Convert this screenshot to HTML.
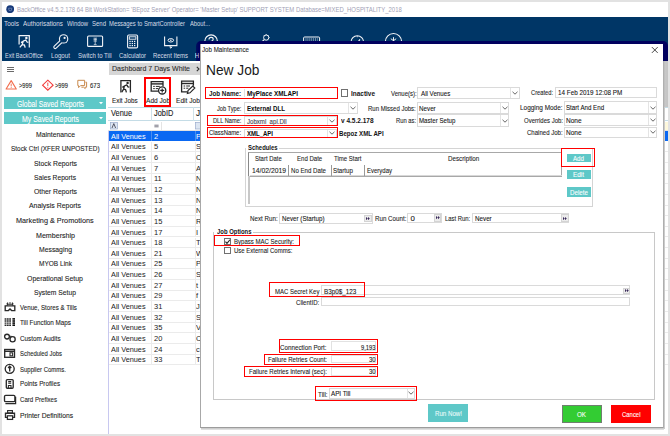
<!DOCTYPE html><html><head><meta charset="utf-8"><style>html,body{margin:0;padding:0;}body{width:670px;height:436px;overflow:hidden;position:relative;font-family:"Liberation Sans",sans-serif;}</style></head><body>
<div style="position:absolute;left:0px;top:0px;width:670px;height:436px;background:#e2e2e2;"></div>
<div style="position:absolute;left:2px;top:2px;width:666px;height:432px;background:#fff;"></div>
<svg style="position:absolute;left:6px;top:4.6px" width="8.4" height="8.4" viewBox="0 0 8.4 8.4"><circle cx="4.2" cy="4.2" r="3.9" fill="#173a7a"/><path d="M2.6 3.2 H5.8 L5.4 5.4 Q4.2 6.2 3 5.4 Z" fill="none" stroke="#7a90c0" stroke-width="0.7"/></svg>
<div style="position:absolute;left:17.00px;top:6.06px;font-size:7.84px;line-height:7.84px;white-space:nowrap;color:#a2a2b6;transform:scaleX(0.760);transform-origin:0 0;-webkit-text-stroke:0.1px #a2a2b6;-webkit-text-stroke:0;">BackOffice v4.5.2.178 64 Bit WorkStation= &#x27;BEpoz Server&#x27;  Operator= &#x27;Master Setup&#x27;  SUPPORT SYSTEM Database=MIXED_HOSPITALITY_2018</div>
<div style="position:absolute;left:2px;top:17px;width:666px;height:44px;background:#003666;"></div>
<div style="position:absolute;left:4.30px;top:19.76px;font-size:7.84px;line-height:7.84px;white-space:nowrap;color:#d8dde6;transform:scaleX(0.821);transform-origin:0 0;-webkit-text-stroke:0.1px #d8dde6;-webkit-text-stroke:0;">Tools</div>
<div style="position:absolute;left:23.00px;top:19.76px;font-size:7.84px;line-height:7.84px;white-space:nowrap;color:#d8dde6;transform:scaleX(0.806);transform-origin:0 0;-webkit-text-stroke:0.1px #d8dde6;-webkit-text-stroke:0;">Authorisations</div>
<div style="position:absolute;left:66.70px;top:19.76px;font-size:7.84px;line-height:7.84px;white-space:nowrap;color:#d8dde6;transform:scaleX(0.754);transform-origin:0 0;-webkit-text-stroke:0.1px #d8dde6;-webkit-text-stroke:0;">Window</div>
<div style="position:absolute;left:92.00px;top:19.76px;font-size:7.84px;line-height:7.84px;white-space:nowrap;color:#d8dde6;transform:scaleX(0.766);transform-origin:0 0;-webkit-text-stroke:0.1px #d8dde6;-webkit-text-stroke:0;">Send</div>
<div style="position:absolute;left:109.40px;top:19.76px;font-size:7.84px;line-height:7.84px;white-space:nowrap;color:#d8dde6;transform:scaleX(0.750);transform-origin:0 0;-webkit-text-stroke:0.1px #d8dde6;-webkit-text-stroke:0;">Messages to SmartController</div>
<div style="position:absolute;left:190.00px;top:19.76px;font-size:7.84px;line-height:7.84px;white-space:nowrap;color:#d8dde6;transform:scaleX(0.741);transform-origin:0 0;-webkit-text-stroke:0.1px #d8dde6;-webkit-text-stroke:0;">About...</div>
<div style="position:absolute;left:4.90px;top:51.76px;font-size:7.84px;line-height:7.84px;white-space:nowrap;color:#d8dde6;transform:scaleX(0.714);transform-origin:0 0;-webkit-text-stroke:0.1px #d8dde6;-webkit-text-stroke:0;">Exit BackOffice</div>
<div style="position:absolute;left:51.00px;top:51.76px;font-size:7.84px;line-height:7.84px;white-space:nowrap;color:#d8dde6;transform:scaleX(0.794);transform-origin:0 0;-webkit-text-stroke:0.1px #d8dde6;-webkit-text-stroke:0;">Logout</div>
<div style="position:absolute;left:78.00px;top:51.76px;font-size:7.84px;line-height:7.84px;white-space:nowrap;color:#d8dde6;transform:scaleX(0.772);transform-origin:0 0;-webkit-text-stroke:0.1px #d8dde6;-webkit-text-stroke:0;">Switch to Till</div>
<div style="position:absolute;left:119.00px;top:51.76px;font-size:7.84px;line-height:7.84px;white-space:nowrap;color:#d8dde6;transform:scaleX(0.766);transform-origin:0 0;-webkit-text-stroke:0.1px #d8dde6;-webkit-text-stroke:0;">Calculator</div>
<div style="position:absolute;left:153.00px;top:51.76px;font-size:7.84px;line-height:7.84px;white-space:nowrap;color:#d8dde6;transform:scaleX(0.759);transform-origin:0 0;-webkit-text-stroke:0.1px #d8dde6;-webkit-text-stroke:0;">Recent Items</div>
<div style="position:absolute;left:195.00px;top:51.76px;font-size:7.84px;line-height:7.84px;white-space:nowrap;color:#d8dde6;transform:scaleX(0.870);transform-origin:0 0;-webkit-text-stroke:0.1px #d8dde6;-webkit-text-stroke:0;">Help</div>
<div style="position:absolute;left:7px;top:66.5px;width:6.5px;height:0.9000000000000057px;background:#6a6a6a;"></div>
<div style="position:absolute;left:7px;top:68.5px;width:6.5px;height:0.9000000000000057px;background:#6a6a6a;"></div>
<div style="position:absolute;left:7px;top:70.5px;width:6.5px;height:0.9000000000000057px;background:#6a6a6a;"></div>
<div style="position:absolute;left:4px;top:97px;width:101.5px;height:12.200000000000003px;background:#5ec8c8;"></div>
<div style="position:absolute;left:4px;top:112.2px;width:101.5px;height:11.799999999999997px;background:#5ec8c8;"></div>
<div style="position:absolute;left:16.50px;top:99.63px;font-size:8.51px;line-height:8.51px;white-space:nowrap;color:#fff;transform:scaleX(0.806);transform-origin:0 0;-webkit-text-stroke:0.1px #fff;">Global Saved Reports</div>
<svg style="position:absolute;left:99px;top:101.6px" width="4" height="3" viewBox="0 0 4 3"><path d="M0 0 H4 L2 2.2Z" fill="#fff"/></svg>
<svg style="position:absolute;left:99px;top:116.8px" width="4" height="3" viewBox="0 0 4 3"><path d="M0 0 H4 L2 2.2Z" fill="#fff"/></svg>
<div style="position:absolute;left:21.50px;top:114.63px;font-size:8.51px;line-height:8.51px;white-space:nowrap;color:#fff;transform:scaleX(0.815);transform-origin:0 0;-webkit-text-stroke:0.1px #fff;">My Saved Reports</div>
<div style="position:absolute;left:19.40px;top:81.83px;font-size:7.28px;line-height:7.28px;white-space:nowrap;color:#1c1c1c;transform:scaleX(0.794);transform-origin:0 0;-webkit-text-stroke:0.1px #1c1c1c;">&gt;999</div>
<div style="position:absolute;left:55.00px;top:81.83px;font-size:7.28px;line-height:7.28px;white-space:nowrap;color:#1c1c1c;transform:scaleX(0.794);transform-origin:0 0;-webkit-text-stroke:0.1px #1c1c1c;">&gt;999</div>
<div style="position:absolute;left:89.50px;top:81.83px;font-size:7.28px;line-height:7.28px;white-space:nowrap;color:#1c1c1c;transform:scaleX(0.825);transform-origin:0 0;-webkit-text-stroke:0.1px #1c1c1c;">673</div>
<div style="position:absolute;left:35.50px;top:130.75px;font-size:8.06px;line-height:8.06px;white-space:nowrap;color:#1c1c1c;transform:scaleX(0.846);transform-origin:0 0;-webkit-text-stroke:0.1px #1c1c1c;">Maintenance</div>
<div style="position:absolute;left:10.70px;top:145.15px;font-size:8.06px;line-height:8.06px;white-space:nowrap;color:#1c1c1c;transform:scaleX(0.799);transform-origin:0 0;-webkit-text-stroke:0.1px #1c1c1c;">Stock Ctrl (XFER UNPOSTED)</div>
<div style="position:absolute;left:33.50px;top:159.55px;font-size:8.06px;line-height:8.06px;white-space:nowrap;color:#1c1c1c;transform:scaleX(0.851);transform-origin:0 0;-webkit-text-stroke:0.1px #1c1c1c;">Stock Reports</div>
<div style="position:absolute;left:34.00px;top:173.65px;font-size:8.06px;line-height:8.06px;white-space:nowrap;color:#1c1c1c;transform:scaleX(0.831);transform-origin:0 0;-webkit-text-stroke:0.1px #1c1c1c;">Sales Reports</div>
<div style="position:absolute;left:33.50px;top:188.05px;font-size:8.06px;line-height:8.06px;white-space:nowrap;color:#1c1c1c;transform:scaleX(0.851);transform-origin:0 0;-webkit-text-stroke:0.1px #1c1c1c;">Other Reports</div>
<div style="position:absolute;left:29.00px;top:202.45px;font-size:8.06px;line-height:8.06px;white-space:nowrap;color:#1c1c1c;transform:scaleX(0.861);transform-origin:0 0;-webkit-text-stroke:0.1px #1c1c1c;">Analysis Reports</div>
<div style="position:absolute;left:16.20px;top:216.65px;font-size:8.06px;line-height:8.06px;white-space:nowrap;color:#1c1c1c;transform:scaleX(0.904);transform-origin:0 0;-webkit-text-stroke:0.1px #1c1c1c;">Marketing &amp; Promotions</div>
<div style="position:absolute;left:35.50px;top:231.75px;font-size:8.06px;line-height:8.06px;white-space:nowrap;color:#1c1c1c;transform:scaleX(0.881);transform-origin:0 0;-webkit-text-stroke:0.1px #1c1c1c;">Membership</div>
<div style="position:absolute;left:38.50px;top:246.15px;font-size:8.06px;line-height:8.06px;white-space:nowrap;color:#1c1c1c;transform:scaleX(0.848);transform-origin:0 0;-webkit-text-stroke:0.1px #1c1c1c;">Messaging</div>
<div style="position:absolute;left:38.50px;top:260.25px;font-size:8.06px;line-height:8.06px;white-space:nowrap;color:#1c1c1c;transform:scaleX(0.811);transform-origin:0 0;-webkit-text-stroke:0.1px #1c1c1c;">MYOB Link</div>
<div style="position:absolute;left:27.00px;top:274.65px;font-size:8.06px;line-height:8.06px;white-space:nowrap;color:#1c1c1c;transform:scaleX(0.863);transform-origin:0 0;-webkit-text-stroke:0.1px #1c1c1c;">Operational Setup</div>
<div style="position:absolute;left:34.00px;top:289.05px;font-size:8.06px;line-height:8.06px;white-space:nowrap;color:#1c1c1c;transform:scaleX(0.838);transform-origin:0 0;-webkit-text-stroke:0.1px #1c1c1c;">System Setup</div>
<div style="position:absolute;left:19.50px;top:303.65px;font-size:8.06px;line-height:8.06px;white-space:nowrap;color:#1c1c1c;transform:scaleX(0.766);transform-origin:0 0;-webkit-text-stroke:0.1px #1c1c1c;">Venue, Stores &amp; Tills</div>
<div style="position:absolute;left:19.50px;top:319.25px;font-size:8.06px;line-height:8.06px;white-space:nowrap;color:#1c1c1c;transform:scaleX(0.785);transform-origin:0 0;-webkit-text-stroke:0.1px #1c1c1c;">Till Function Maps</div>
<div style="position:absolute;left:19.50px;top:334.65px;font-size:8.06px;line-height:8.06px;white-space:nowrap;color:#1c1c1c;transform:scaleX(0.784);transform-origin:0 0;-webkit-text-stroke:0.1px #1c1c1c;">Custom Audits</div>
<div style="position:absolute;left:19.50px;top:349.95px;font-size:8.06px;line-height:8.06px;white-space:nowrap;color:#1c1c1c;transform:scaleX(0.733);transform-origin:0 0;-webkit-text-stroke:0.1px #1c1c1c;">Scheduled Jobs</div>
<div style="position:absolute;left:19.50px;top:365.55px;font-size:8.06px;line-height:8.06px;white-space:nowrap;color:#1c1c1c;transform:scaleX(0.745);transform-origin:0 0;-webkit-text-stroke:0.1px #1c1c1c;">Supplier Comms.</div>
<div style="position:absolute;left:19.50px;top:380.45px;font-size:8.06px;line-height:8.06px;white-space:nowrap;color:#1c1c1c;transform:scaleX(0.778);transform-origin:0 0;-webkit-text-stroke:0.1px #1c1c1c;">Points Profiles</div>
<div style="position:absolute;left:19.50px;top:396.05px;font-size:8.06px;line-height:8.06px;white-space:nowrap;color:#1c1c1c;transform:scaleX(0.759);transform-origin:0 0;-webkit-text-stroke:0.1px #1c1c1c;">Card Prefixes</div>
<div style="position:absolute;left:19.50px;top:411.65px;font-size:8.06px;line-height:8.06px;white-space:nowrap;color:#1c1c1c;transform:scaleX(0.835);transform-origin:0 0;-webkit-text-stroke:0.1px #1c1c1c;">Printer Definitions</div>
<div style="position:absolute;left:109px;top:63.3px;width:101px;height:11.700000000000003px;background:#d6d6d6;"></div>
<div style="position:absolute;left:111.80px;top:64.95px;font-size:8.06px;line-height:8.06px;white-space:nowrap;color:#2a2a2a;transform:scaleX(0.872);transform-origin:0 0;-webkit-text-stroke:0.1px #2a2a2a;">Dashboard 7 Days White</div>
<div style="position:absolute;left:112.30px;top:97.46px;font-size:7.84px;line-height:7.84px;white-space:nowrap;color:#1c1c1c;transform:scaleX(0.809);transform-origin:0 0;-webkit-text-stroke:0.1px #1c1c1c;">Exit Jobs</div>
<div style="position:absolute;left:145.60px;top:97.46px;font-size:7.84px;line-height:7.84px;white-space:nowrap;color:#1c1c1c;transform:scaleX(0.842);transform-origin:0 0;-webkit-text-stroke:0.1px #1c1c1c;">Add Job</div>
<div style="position:absolute;left:175.90px;top:97.46px;font-size:7.84px;line-height:7.84px;white-space:nowrap;color:#1c1c1c;transform:scaleX(0.848);transform-origin:0 0;-webkit-text-stroke:0.1px #1c1c1c;">Edit Job</div>
<div style="position:absolute;left:143.5px;top:77px;width:27.5px;height:30.299999999999997px;border:2px solid #f00;box-sizing:border-box;"></div>
<div style="position:absolute;left:108px;top:106.5px;width:560px;height:327.5px;border-left:1px solid #c8c8f0;box-sizing:border-box;"></div>
<div style="position:absolute;left:108px;top:106.5px;width:560px;height:14.5px;border-top:1px solid #c4dce6;border-bottom:1px solid #c4dce6;box-sizing:border-box;background:#fff;"></div>
<div style="position:absolute;left:111.40px;top:110.39px;font-size:8.18px;line-height:8.18px;white-space:nowrap;color:#1c1c1c;transform:scaleX(0.906);transform-origin:0 0;-webkit-text-stroke:0.1px #1c1c1c;">Venue</div>
<div style="position:absolute;left:154.00px;top:110.39px;font-size:8.18px;line-height:8.18px;white-space:nowrap;color:#1c1c1c;transform:scaleX(0.904);transform-origin:0 0;-webkit-text-stroke:0.1px #1c1c1c;">JobID</div>
<div style="position:absolute;left:196.00px;top:110.39px;font-size:8.18px;line-height:8.18px;white-space:nowrap;color:#1c1c1c;-webkit-text-stroke:0.1px #1c1c1c;">JobName</div>
<div style="position:absolute;left:151.3px;top:107px;width:1.0px;height:14px;background:#cfe2ea;"></div>
<div style="position:absolute;left:193.4px;top:107px;width:1.0px;height:14px;background:#cfe2ea;"></div>
<div style="position:absolute;left:108px;top:121px;width:560px;height:9.5px;background:#fff;border-bottom:1px solid #e2e2e2;box-sizing:border-box;"></div>
<div style="position:absolute;left:161px;top:122px;width:1px;height:8px;background:#e4e4e4;"></div>
<div style="position:absolute;left:600px;top:121.5px;width:68px;height:8.5px;background:#fdf8dc;"></div>
<div style="position:absolute;left:108.5px;top:130.5px;width:559.5px;height:10.640000000000015px;background:#0a68f2;box-sizing:border-box;"></div>
<div style="position:absolute;left:111.40px;top:132.74px;font-size:7.5px;line-height:7.5px;white-space:nowrap;color:#fff;transform:scaleX(0.976);transform-origin:0 0;-webkit-text-stroke:0.1px #fff;-webkit-text-stroke:0;">All Venues</div>
<div style="position:absolute;left:154.00px;top:132.74px;font-size:7.5px;line-height:7.5px;white-space:nowrap;color:#fff;-webkit-text-stroke:0.1px #fff;-webkit-text-stroke:0;">2</div>
<div style="position:absolute;left:196.00px;top:132.74px;font-size:7.5px;line-height:7.5px;white-space:nowrap;color:#fff;-webkit-text-stroke:0.1px #fff;-webkit-text-stroke:0;">P</div>
<div style="position:absolute;left:151px;top:130.5px;width:1px;height:10.640000000000015px;background:#4a8cf0;"></div>
<div style="position:absolute;left:194.5px;top:130.5px;width:1.0px;height:10.640000000000015px;background:#4a8cf0;"></div>
<div style="position:absolute;left:108.5px;top:141.74px;width:559.5px;height:10.639999999999986px;background:#fff;border-bottom:1px solid #ebebeb;box-sizing:border-box;"></div>
<div style="position:absolute;left:111.40px;top:143.38px;font-size:7.5px;line-height:7.5px;white-space:nowrap;color:#1c1c1c;transform:scaleX(0.976);transform-origin:0 0;-webkit-text-stroke:0.1px #1c1c1c;-webkit-text-stroke:0;">All Venues</div>
<div style="position:absolute;left:154.00px;top:143.38px;font-size:7.5px;line-height:7.5px;white-space:nowrap;color:#1c1c1c;-webkit-text-stroke:0.1px #1c1c1c;-webkit-text-stroke:0;">5</div>
<div style="position:absolute;left:196.00px;top:143.38px;font-size:7.5px;line-height:7.5px;white-space:nowrap;color:#1c1c1c;-webkit-text-stroke:0.1px #1c1c1c;-webkit-text-stroke:0;">S</div>
<div style="position:absolute;left:151px;top:141.74px;width:1px;height:10.639999999999986px;background:#ebebeb;"></div>
<div style="position:absolute;left:194.5px;top:141.74px;width:1.0px;height:10.639999999999986px;background:#ebebeb;"></div>
<div style="position:absolute;left:108.5px;top:152.38px;width:559.5px;height:10.639999999999986px;background:#fff;border-bottom:1px solid #ebebeb;box-sizing:border-box;"></div>
<div style="position:absolute;left:111.40px;top:154.02px;font-size:7.5px;line-height:7.5px;white-space:nowrap;color:#1c1c1c;transform:scaleX(0.976);transform-origin:0 0;-webkit-text-stroke:0.1px #1c1c1c;-webkit-text-stroke:0;">All Venues</div>
<div style="position:absolute;left:154.00px;top:154.02px;font-size:7.5px;line-height:7.5px;white-space:nowrap;color:#1c1c1c;-webkit-text-stroke:0.1px #1c1c1c;-webkit-text-stroke:0;">6</div>
<div style="position:absolute;left:196.00px;top:154.02px;font-size:7.5px;line-height:7.5px;white-space:nowrap;color:#1c1c1c;-webkit-text-stroke:0.1px #1c1c1c;-webkit-text-stroke:0;">C</div>
<div style="position:absolute;left:151px;top:152.38px;width:1px;height:10.639999999999986px;background:#ebebeb;"></div>
<div style="position:absolute;left:194.5px;top:152.38px;width:1.0px;height:10.639999999999986px;background:#ebebeb;"></div>
<div style="position:absolute;left:108.5px;top:163.01999999999998px;width:559.5px;height:10.639999999999986px;background:#fff;border-bottom:1px solid #ebebeb;box-sizing:border-box;"></div>
<div style="position:absolute;left:111.40px;top:164.66px;font-size:7.5px;line-height:7.5px;white-space:nowrap;color:#1c1c1c;transform:scaleX(0.976);transform-origin:0 0;-webkit-text-stroke:0.1px #1c1c1c;-webkit-text-stroke:0;">All Venues</div>
<div style="position:absolute;left:154.00px;top:164.66px;font-size:7.5px;line-height:7.5px;white-space:nowrap;color:#1c1c1c;-webkit-text-stroke:0.1px #1c1c1c;-webkit-text-stroke:0;">7</div>
<div style="position:absolute;left:196.00px;top:164.66px;font-size:7.5px;line-height:7.5px;white-space:nowrap;color:#1c1c1c;-webkit-text-stroke:0.1px #1c1c1c;-webkit-text-stroke:0;">A</div>
<div style="position:absolute;left:151px;top:163.01999999999998px;width:1px;height:10.639999999999986px;background:#ebebeb;"></div>
<div style="position:absolute;left:194.5px;top:163.01999999999998px;width:1.0px;height:10.639999999999986px;background:#ebebeb;"></div>
<div style="position:absolute;left:108.5px;top:173.66px;width:559.5px;height:10.640000000000015px;background:#fff;border-bottom:1px solid #ebebeb;box-sizing:border-box;"></div>
<div style="position:absolute;left:111.40px;top:175.30px;font-size:7.5px;line-height:7.5px;white-space:nowrap;color:#1c1c1c;transform:scaleX(0.976);transform-origin:0 0;-webkit-text-stroke:0.1px #1c1c1c;-webkit-text-stroke:0;">All Venues</div>
<div style="position:absolute;left:154.00px;top:175.30px;font-size:7.5px;line-height:7.5px;white-space:nowrap;color:#1c1c1c;-webkit-text-stroke:0.1px #1c1c1c;-webkit-text-stroke:0;">11</div>
<div style="position:absolute;left:196.00px;top:175.30px;font-size:7.5px;line-height:7.5px;white-space:nowrap;color:#1c1c1c;-webkit-text-stroke:0.1px #1c1c1c;-webkit-text-stroke:0;">N</div>
<div style="position:absolute;left:151px;top:173.66px;width:1px;height:10.640000000000015px;background:#ebebeb;"></div>
<div style="position:absolute;left:194.5px;top:173.66px;width:1.0px;height:10.640000000000015px;background:#ebebeb;"></div>
<div style="position:absolute;left:108.5px;top:184.3px;width:559.5px;height:10.639999999999986px;background:#fff;border-bottom:1px solid #ebebeb;box-sizing:border-box;"></div>
<div style="position:absolute;left:111.40px;top:185.94px;font-size:7.5px;line-height:7.5px;white-space:nowrap;color:#1c1c1c;transform:scaleX(0.976);transform-origin:0 0;-webkit-text-stroke:0.1px #1c1c1c;-webkit-text-stroke:0;">All Venues</div>
<div style="position:absolute;left:154.00px;top:185.94px;font-size:7.5px;line-height:7.5px;white-space:nowrap;color:#1c1c1c;-webkit-text-stroke:0.1px #1c1c1c;-webkit-text-stroke:0;">12</div>
<div style="position:absolute;left:196.00px;top:185.94px;font-size:7.5px;line-height:7.5px;white-space:nowrap;color:#1c1c1c;-webkit-text-stroke:0.1px #1c1c1c;-webkit-text-stroke:0;">N</div>
<div style="position:absolute;left:151px;top:184.3px;width:1px;height:10.639999999999986px;background:#ebebeb;"></div>
<div style="position:absolute;left:194.5px;top:184.3px;width:1.0px;height:10.639999999999986px;background:#ebebeb;"></div>
<div style="position:absolute;left:108.5px;top:194.94px;width:559.5px;height:10.639999999999986px;background:#fff;border-bottom:1px solid #ebebeb;box-sizing:border-box;"></div>
<div style="position:absolute;left:111.40px;top:196.58px;font-size:7.5px;line-height:7.5px;white-space:nowrap;color:#1c1c1c;transform:scaleX(0.976);transform-origin:0 0;-webkit-text-stroke:0.1px #1c1c1c;-webkit-text-stroke:0;">All Venues</div>
<div style="position:absolute;left:154.00px;top:196.58px;font-size:7.5px;line-height:7.5px;white-space:nowrap;color:#1c1c1c;-webkit-text-stroke:0.1px #1c1c1c;-webkit-text-stroke:0;">13</div>
<div style="position:absolute;left:196.00px;top:196.58px;font-size:7.5px;line-height:7.5px;white-space:nowrap;color:#1c1c1c;-webkit-text-stroke:0.1px #1c1c1c;-webkit-text-stroke:0;">N</div>
<div style="position:absolute;left:151px;top:194.94px;width:1px;height:10.639999999999986px;background:#ebebeb;"></div>
<div style="position:absolute;left:194.5px;top:194.94px;width:1.0px;height:10.639999999999986px;background:#ebebeb;"></div>
<div style="position:absolute;left:108.5px;top:205.57999999999998px;width:559.5px;height:10.639999999999986px;background:#fff;border-bottom:1px solid #ebebeb;box-sizing:border-box;"></div>
<div style="position:absolute;left:111.40px;top:207.22px;font-size:7.5px;line-height:7.5px;white-space:nowrap;color:#1c1c1c;transform:scaleX(0.976);transform-origin:0 0;-webkit-text-stroke:0.1px #1c1c1c;-webkit-text-stroke:0;">All Venues</div>
<div style="position:absolute;left:154.00px;top:207.22px;font-size:7.5px;line-height:7.5px;white-space:nowrap;color:#1c1c1c;-webkit-text-stroke:0.1px #1c1c1c;-webkit-text-stroke:0;">14</div>
<div style="position:absolute;left:196.00px;top:207.22px;font-size:7.5px;line-height:7.5px;white-space:nowrap;color:#1c1c1c;-webkit-text-stroke:0.1px #1c1c1c;-webkit-text-stroke:0;">N</div>
<div style="position:absolute;left:151px;top:205.57999999999998px;width:1px;height:10.639999999999986px;background:#ebebeb;"></div>
<div style="position:absolute;left:194.5px;top:205.57999999999998px;width:1.0px;height:10.639999999999986px;background:#ebebeb;"></div>
<div style="position:absolute;left:108.5px;top:216.22px;width:559.5px;height:10.640000000000015px;background:#fff;border-bottom:1px solid #ebebeb;box-sizing:border-box;"></div>
<div style="position:absolute;left:111.40px;top:217.86px;font-size:7.5px;line-height:7.5px;white-space:nowrap;color:#1c1c1c;transform:scaleX(0.976);transform-origin:0 0;-webkit-text-stroke:0.1px #1c1c1c;-webkit-text-stroke:0;">All Venues</div>
<div style="position:absolute;left:154.00px;top:217.86px;font-size:7.5px;line-height:7.5px;white-space:nowrap;color:#1c1c1c;-webkit-text-stroke:0.1px #1c1c1c;-webkit-text-stroke:0;">15</div>
<div style="position:absolute;left:196.00px;top:217.86px;font-size:7.5px;line-height:7.5px;white-space:nowrap;color:#1c1c1c;-webkit-text-stroke:0.1px #1c1c1c;-webkit-text-stroke:0;">R</div>
<div style="position:absolute;left:151px;top:216.22px;width:1px;height:10.640000000000015px;background:#ebebeb;"></div>
<div style="position:absolute;left:194.5px;top:216.22px;width:1.0px;height:10.640000000000015px;background:#ebebeb;"></div>
<div style="position:absolute;left:108.5px;top:226.86px;width:559.5px;height:10.639999999999986px;background:#fff;border-bottom:1px solid #ebebeb;box-sizing:border-box;"></div>
<div style="position:absolute;left:111.40px;top:228.50px;font-size:7.5px;line-height:7.5px;white-space:nowrap;color:#1c1c1c;transform:scaleX(0.976);transform-origin:0 0;-webkit-text-stroke:0.1px #1c1c1c;-webkit-text-stroke:0;">All Venues</div>
<div style="position:absolute;left:154.00px;top:228.50px;font-size:7.5px;line-height:7.5px;white-space:nowrap;color:#1c1c1c;-webkit-text-stroke:0.1px #1c1c1c;-webkit-text-stroke:0;">17</div>
<div style="position:absolute;left:196.00px;top:228.50px;font-size:7.5px;line-height:7.5px;white-space:nowrap;color:#1c1c1c;-webkit-text-stroke:0.1px #1c1c1c;-webkit-text-stroke:0;">I</div>
<div style="position:absolute;left:151px;top:226.86px;width:1px;height:10.639999999999986px;background:#ebebeb;"></div>
<div style="position:absolute;left:194.5px;top:226.86px;width:1.0px;height:10.639999999999986px;background:#ebebeb;"></div>
<div style="position:absolute;left:108.5px;top:237.5px;width:559.5px;height:10.639999999999986px;background:#fff;border-bottom:1px solid #ebebeb;box-sizing:border-box;"></div>
<div style="position:absolute;left:111.40px;top:239.14px;font-size:7.5px;line-height:7.5px;white-space:nowrap;color:#1c1c1c;transform:scaleX(0.976);transform-origin:0 0;-webkit-text-stroke:0.1px #1c1c1c;-webkit-text-stroke:0;">All Venues</div>
<div style="position:absolute;left:154.00px;top:239.14px;font-size:7.5px;line-height:7.5px;white-space:nowrap;color:#1c1c1c;-webkit-text-stroke:0.1px #1c1c1c;-webkit-text-stroke:0;">18</div>
<div style="position:absolute;left:196.00px;top:239.14px;font-size:7.5px;line-height:7.5px;white-space:nowrap;color:#1c1c1c;-webkit-text-stroke:0.1px #1c1c1c;-webkit-text-stroke:0;">T</div>
<div style="position:absolute;left:151px;top:237.5px;width:1px;height:10.639999999999986px;background:#ebebeb;"></div>
<div style="position:absolute;left:194.5px;top:237.5px;width:1.0px;height:10.639999999999986px;background:#ebebeb;"></div>
<div style="position:absolute;left:108.5px;top:248.14px;width:559.5px;height:10.639999999999986px;background:#fff;border-bottom:1px solid #ebebeb;box-sizing:border-box;"></div>
<div style="position:absolute;left:111.40px;top:249.78px;font-size:7.5px;line-height:7.5px;white-space:nowrap;color:#1c1c1c;transform:scaleX(0.976);transform-origin:0 0;-webkit-text-stroke:0.1px #1c1c1c;-webkit-text-stroke:0;">All Venues</div>
<div style="position:absolute;left:154.00px;top:249.78px;font-size:7.5px;line-height:7.5px;white-space:nowrap;color:#1c1c1c;-webkit-text-stroke:0.1px #1c1c1c;-webkit-text-stroke:0;">21</div>
<div style="position:absolute;left:196.00px;top:249.78px;font-size:7.5px;line-height:7.5px;white-space:nowrap;color:#1c1c1c;-webkit-text-stroke:0.1px #1c1c1c;-webkit-text-stroke:0;">W</div>
<div style="position:absolute;left:151px;top:248.14px;width:1px;height:10.639999999999986px;background:#ebebeb;"></div>
<div style="position:absolute;left:194.5px;top:248.14px;width:1.0px;height:10.639999999999986px;background:#ebebeb;"></div>
<div style="position:absolute;left:108.5px;top:258.78px;width:559.5px;height:10.639999999999986px;background:#fff;border-bottom:1px solid #ebebeb;box-sizing:border-box;"></div>
<div style="position:absolute;left:111.40px;top:260.42px;font-size:7.5px;line-height:7.5px;white-space:nowrap;color:#1c1c1c;transform:scaleX(0.976);transform-origin:0 0;-webkit-text-stroke:0.1px #1c1c1c;-webkit-text-stroke:0;">All Venues</div>
<div style="position:absolute;left:154.00px;top:260.42px;font-size:7.5px;line-height:7.5px;white-space:nowrap;color:#1c1c1c;-webkit-text-stroke:0.1px #1c1c1c;-webkit-text-stroke:0;">25</div>
<div style="position:absolute;left:196.00px;top:260.42px;font-size:7.5px;line-height:7.5px;white-space:nowrap;color:#1c1c1c;-webkit-text-stroke:0.1px #1c1c1c;-webkit-text-stroke:0;">P</div>
<div style="position:absolute;left:151px;top:258.78px;width:1px;height:10.639999999999986px;background:#ebebeb;"></div>
<div style="position:absolute;left:194.5px;top:258.78px;width:1.0px;height:10.639999999999986px;background:#ebebeb;"></div>
<div style="position:absolute;left:108.5px;top:269.41999999999996px;width:559.5px;height:10.639999999999986px;background:#fff;border-bottom:1px solid #ebebeb;box-sizing:border-box;"></div>
<div style="position:absolute;left:111.40px;top:271.06px;font-size:7.5px;line-height:7.5px;white-space:nowrap;color:#1c1c1c;transform:scaleX(0.976);transform-origin:0 0;-webkit-text-stroke:0.1px #1c1c1c;-webkit-text-stroke:0;">All Venues</div>
<div style="position:absolute;left:154.00px;top:271.06px;font-size:7.5px;line-height:7.5px;white-space:nowrap;color:#1c1c1c;-webkit-text-stroke:0.1px #1c1c1c;-webkit-text-stroke:0;">26</div>
<div style="position:absolute;left:196.00px;top:271.06px;font-size:7.5px;line-height:7.5px;white-space:nowrap;color:#1c1c1c;-webkit-text-stroke:0.1px #1c1c1c;-webkit-text-stroke:0;">S</div>
<div style="position:absolute;left:151px;top:269.41999999999996px;width:1px;height:10.639999999999986px;background:#ebebeb;"></div>
<div style="position:absolute;left:194.5px;top:269.41999999999996px;width:1.0px;height:10.639999999999986px;background:#ebebeb;"></div>
<div style="position:absolute;left:108.5px;top:280.06px;width:559.5px;height:10.639999999999986px;background:#fff;border-bottom:1px solid #ebebeb;box-sizing:border-box;"></div>
<div style="position:absolute;left:111.40px;top:281.70px;font-size:7.5px;line-height:7.5px;white-space:nowrap;color:#1c1c1c;transform:scaleX(0.976);transform-origin:0 0;-webkit-text-stroke:0.1px #1c1c1c;-webkit-text-stroke:0;">All Venues</div>
<div style="position:absolute;left:154.00px;top:281.70px;font-size:7.5px;line-height:7.5px;white-space:nowrap;color:#1c1c1c;-webkit-text-stroke:0.1px #1c1c1c;-webkit-text-stroke:0;">27</div>
<div style="position:absolute;left:196.00px;top:281.70px;font-size:7.5px;line-height:7.5px;white-space:nowrap;color:#1c1c1c;-webkit-text-stroke:0.1px #1c1c1c;-webkit-text-stroke:0;">t</div>
<div style="position:absolute;left:151px;top:280.06px;width:1px;height:10.639999999999986px;background:#ebebeb;"></div>
<div style="position:absolute;left:194.5px;top:280.06px;width:1.0px;height:10.639999999999986px;background:#ebebeb;"></div>
<div style="position:absolute;left:108.5px;top:290.70000000000005px;width:559.5px;height:10.639999999999986px;background:#fff;border-bottom:1px solid #ebebeb;box-sizing:border-box;"></div>
<div style="position:absolute;left:111.40px;top:292.35px;font-size:7.5px;line-height:7.5px;white-space:nowrap;color:#1c1c1c;transform:scaleX(0.976);transform-origin:0 0;-webkit-text-stroke:0.1px #1c1c1c;-webkit-text-stroke:0;">All Venues</div>
<div style="position:absolute;left:154.00px;top:292.35px;font-size:7.5px;line-height:7.5px;white-space:nowrap;color:#1c1c1c;-webkit-text-stroke:0.1px #1c1c1c;-webkit-text-stroke:0;">29</div>
<div style="position:absolute;left:196.00px;top:292.35px;font-size:7.5px;line-height:7.5px;white-space:nowrap;color:#1c1c1c;-webkit-text-stroke:0.1px #1c1c1c;-webkit-text-stroke:0;">f</div>
<div style="position:absolute;left:151px;top:290.70000000000005px;width:1px;height:10.639999999999986px;background:#ebebeb;"></div>
<div style="position:absolute;left:194.5px;top:290.70000000000005px;width:1.0px;height:10.639999999999986px;background:#ebebeb;"></div>
<div style="position:absolute;left:108.5px;top:301.34000000000003px;width:559.5px;height:10.639999999999986px;background:#fff;border-bottom:1px solid #ebebeb;box-sizing:border-box;"></div>
<div style="position:absolute;left:111.40px;top:302.99px;font-size:7.5px;line-height:7.5px;white-space:nowrap;color:#1c1c1c;transform:scaleX(0.976);transform-origin:0 0;-webkit-text-stroke:0.1px #1c1c1c;-webkit-text-stroke:0;">All Venues</div>
<div style="position:absolute;left:154.00px;top:302.99px;font-size:7.5px;line-height:7.5px;white-space:nowrap;color:#1c1c1c;-webkit-text-stroke:0.1px #1c1c1c;-webkit-text-stroke:0;">31</div>
<div style="position:absolute;left:196.00px;top:302.99px;font-size:7.5px;line-height:7.5px;white-space:nowrap;color:#1c1c1c;-webkit-text-stroke:0.1px #1c1c1c;-webkit-text-stroke:0;">J</div>
<div style="position:absolute;left:151px;top:301.34000000000003px;width:1px;height:10.639999999999986px;background:#ebebeb;"></div>
<div style="position:absolute;left:194.5px;top:301.34000000000003px;width:1.0px;height:10.639999999999986px;background:#ebebeb;"></div>
<div style="position:absolute;left:108.5px;top:311.98px;width:559.5px;height:10.639999999999986px;background:#fff;border-bottom:1px solid #ebebeb;box-sizing:border-box;"></div>
<div style="position:absolute;left:111.40px;top:313.62px;font-size:7.5px;line-height:7.5px;white-space:nowrap;color:#1c1c1c;transform:scaleX(0.976);transform-origin:0 0;-webkit-text-stroke:0.1px #1c1c1c;-webkit-text-stroke:0;">All Venues</div>
<div style="position:absolute;left:154.00px;top:313.62px;font-size:7.5px;line-height:7.5px;white-space:nowrap;color:#1c1c1c;-webkit-text-stroke:0.1px #1c1c1c;-webkit-text-stroke:0;">32</div>
<div style="position:absolute;left:196.00px;top:313.62px;font-size:7.5px;line-height:7.5px;white-space:nowrap;color:#1c1c1c;-webkit-text-stroke:0.1px #1c1c1c;-webkit-text-stroke:0;">S</div>
<div style="position:absolute;left:151px;top:311.98px;width:1px;height:10.639999999999986px;background:#ebebeb;"></div>
<div style="position:absolute;left:194.5px;top:311.98px;width:1.0px;height:10.639999999999986px;background:#ebebeb;"></div>
<div style="position:absolute;left:108.5px;top:322.62px;width:559.5px;height:10.639999999999986px;background:#fff;border-bottom:1px solid #ebebeb;box-sizing:border-box;"></div>
<div style="position:absolute;left:111.40px;top:324.26px;font-size:7.5px;line-height:7.5px;white-space:nowrap;color:#1c1c1c;transform:scaleX(0.976);transform-origin:0 0;-webkit-text-stroke:0.1px #1c1c1c;-webkit-text-stroke:0;">All Venues</div>
<div style="position:absolute;left:154.00px;top:324.26px;font-size:7.5px;line-height:7.5px;white-space:nowrap;color:#1c1c1c;-webkit-text-stroke:0.1px #1c1c1c;-webkit-text-stroke:0;">35</div>
<div style="position:absolute;left:196.00px;top:324.26px;font-size:7.5px;line-height:7.5px;white-space:nowrap;color:#1c1c1c;-webkit-text-stroke:0.1px #1c1c1c;-webkit-text-stroke:0;">V</div>
<div style="position:absolute;left:151px;top:322.62px;width:1px;height:10.639999999999986px;background:#ebebeb;"></div>
<div style="position:absolute;left:194.5px;top:322.62px;width:1.0px;height:10.639999999999986px;background:#ebebeb;"></div>
<div style="position:absolute;left:108.5px;top:333.26px;width:559.5px;height:10.639999999999986px;background:#fff;border-bottom:1px solid #ebebeb;box-sizing:border-box;"></div>
<div style="position:absolute;left:111.40px;top:334.90px;font-size:7.5px;line-height:7.5px;white-space:nowrap;color:#1c1c1c;transform:scaleX(0.976);transform-origin:0 0;-webkit-text-stroke:0.1px #1c1c1c;-webkit-text-stroke:0;">All Venues</div>
<div style="position:absolute;left:154.00px;top:334.90px;font-size:7.5px;line-height:7.5px;white-space:nowrap;color:#1c1c1c;-webkit-text-stroke:0.1px #1c1c1c;-webkit-text-stroke:0;">20</div>
<div style="position:absolute;left:196.00px;top:334.90px;font-size:7.5px;line-height:7.5px;white-space:nowrap;color:#1c1c1c;-webkit-text-stroke:0.1px #1c1c1c;-webkit-text-stroke:0;">C</div>
<div style="position:absolute;left:151px;top:333.26px;width:1px;height:10.639999999999986px;background:#ebebeb;"></div>
<div style="position:absolute;left:194.5px;top:333.26px;width:1.0px;height:10.639999999999986px;background:#ebebeb;"></div>
<div style="position:absolute;left:108.5px;top:343.9px;width:559.5px;height:10.639999999999986px;background:#fff;border-bottom:1px solid #ebebeb;box-sizing:border-box;"></div>
<div style="position:absolute;left:111.40px;top:345.54px;font-size:7.5px;line-height:7.5px;white-space:nowrap;color:#1c1c1c;transform:scaleX(0.976);transform-origin:0 0;-webkit-text-stroke:0.1px #1c1c1c;-webkit-text-stroke:0;">All Venues</div>
<div style="position:absolute;left:154.00px;top:345.54px;font-size:7.5px;line-height:7.5px;white-space:nowrap;color:#1c1c1c;-webkit-text-stroke:0.1px #1c1c1c;-webkit-text-stroke:0;">24</div>
<div style="position:absolute;left:196.00px;top:345.54px;font-size:7.5px;line-height:7.5px;white-space:nowrap;color:#1c1c1c;-webkit-text-stroke:0.1px #1c1c1c;-webkit-text-stroke:0;">c</div>
<div style="position:absolute;left:151px;top:343.9px;width:1px;height:10.639999999999986px;background:#ebebeb;"></div>
<div style="position:absolute;left:194.5px;top:343.9px;width:1.0px;height:10.639999999999986px;background:#ebebeb;"></div>
<div style="position:absolute;left:108.5px;top:354.53999999999996px;width:559.5px;height:10.639999999999986px;background:#fff;border-bottom:1px solid #ebebeb;box-sizing:border-box;"></div>
<div style="position:absolute;left:111.40px;top:356.18px;font-size:7.5px;line-height:7.5px;white-space:nowrap;color:#1c1c1c;transform:scaleX(0.976);transform-origin:0 0;-webkit-text-stroke:0.1px #1c1c1c;-webkit-text-stroke:0;">All Venues</div>
<div style="position:absolute;left:154.00px;top:356.18px;font-size:7.5px;line-height:7.5px;white-space:nowrap;color:#1c1c1c;-webkit-text-stroke:0.1px #1c1c1c;-webkit-text-stroke:0;">33</div>
<div style="position:absolute;left:196.00px;top:356.18px;font-size:7.5px;line-height:7.5px;white-space:nowrap;color:#1c1c1c;-webkit-text-stroke:0.1px #1c1c1c;-webkit-text-stroke:0;">T</div>
<div style="position:absolute;left:151px;top:354.53999999999996px;width:1px;height:10.639999999999986px;background:#ebebeb;"></div>
<div style="position:absolute;left:194.5px;top:354.53999999999996px;width:1.0px;height:10.639999999999986px;background:#ebebeb;"></div>
<svg style="position:absolute;left:0;top:0" width="670" height="436" viewBox="0 0 670 436"><path d="M19.1 44.4 V35.7 H29.3 V47.6" fill="none" stroke="#f2f4f8" stroke-width="1.2"/><path d="M19.8 47.4 L22.2 44.6 L24.4 45 L25.2 47.6 M22.2 44.6 L23.2 41.2 L25.8 40 L27 42 L28.4 42.4 M23.2 41.2 L21 42.6" fill="none" stroke="#f2f4f8" stroke-width="1.3" stroke-linejoin="round"/><circle cx="26.4" cy="38.1" r="1.25" fill="#f2f4f8"/><circle cx="63.6" cy="38.9" r="4.7" fill="#f2f4f8"/><path d="M61 41.6 L55.2 47.2" stroke="#f2f4f8" stroke-width="3.9" stroke-linecap="round"/><circle cx="63.6" cy="38.9" r="3.6" fill="#003666"/><path d="M61 41.6 L55.2 47.2" stroke="#003666" stroke-width="1.7" stroke-linecap="round"/><circle cx="64.6" cy="37.9" r="1.1" fill="#f2f4f8"/><rect x="87.6" y="36" width="15" height="10.4" rx="1" fill="none" stroke="#f2f4f8" stroke-width="1.1"/><path d="M93.5 38.2 H97 M93.5 39.6 H97 M93.5 41 H97 M95.2 38.2 V44.2 M93.8 44.6 H96.6" fill="none" stroke="#f2f4f8" stroke-width="0.7"/><rect x="127.6" y="35" width="10" height="12.9" rx="1.2" fill="none" stroke="#f2f4f8" stroke-width="1.1"/><rect x="129.3" y="36.8" width="6.6" height="2.4" fill="none" stroke="#f2f4f8" stroke-width="0.9"/><rect x="129.4" y="40.8" width="1.3" height="1.2" fill="#f2f4f8"/><rect x="131.7" y="40.8" width="1.3" height="1.2" fill="#f2f4f8"/><rect x="134.0" y="40.8" width="1.3" height="1.2" fill="#f2f4f8"/><rect x="129.4" y="42.9" width="1.3" height="1.2" fill="#f2f4f8"/><rect x="131.7" y="42.9" width="1.3" height="1.2" fill="#f2f4f8"/><rect x="134.0" y="42.9" width="1.3" height="1.2" fill="#f2f4f8"/><rect x="129.4" y="45.0" width="1.3" height="1.2" fill="#f2f4f8"/><rect x="131.7" y="45.0" width="1.3" height="1.2" fill="#f2f4f8"/><rect x="134.0" y="45.0" width="1.3" height="1.2" fill="#f2f4f8"/><path d="M164.6 36.4 V45.6 H176.9 V36.4" fill="none" stroke="#f2f4f8" stroke-width="1.1"/><ellipse cx="170.8" cy="40.3" rx="2.8" ry="1.7" fill="none" stroke="#f2f4f8" stroke-width="1"/><circle cx="170.8" cy="40.3" r="0.8" fill="#f2f4f8"/><path d="M170.8 45.6 V48 M169.4 46.8 L170.8 48.2 L172.2 46.8" fill="none" stroke="#f2f4f8" stroke-width="0.9"/><circle cx="211.1" cy="41.2" r="6.3" fill="none" stroke="#f2f4f8" stroke-width="1.1"/><path d="M209 39.4 Q209 37.4 211.1 37.4 Q213.2 37.4 213.2 39.3 Q213.2 40.6 211.1 41.6 V43" fill="none" stroke="#f2f4f8" stroke-width="1.1"/><circle cx="266.2" cy="37.6" r="2.6" fill="none" stroke="#f2f4f8" stroke-width="1"/><path d="M264.2 39.6 L259.6 44.2" stroke="#f2f4f8" stroke-width="1.2"/><path d="M266.2 34.2 V35 M269.6 37.6 H268.8 M268.6 35.2 L268 35.8 M263.8 35.2 L264.4 35.8" stroke="#f2f4f8" stroke-width="0.9"/><rect x="303.6" y="37" width="16" height="8" rx="1" fill="none" stroke="#f2f4f8" stroke-width="1"/><path d="M305.5 39 H317.7 M305.5 41 H317.7" stroke="#f2f4f8" stroke-width="0.9" stroke-dasharray="1 0.9"/><circle cx="357.3" cy="42" r="6.3" fill="none" stroke="#f2f4f8" stroke-width="1.1"/><path d="M355.4 42.4 L356.8 43.6 L360 39.4" fill="none" stroke="#f2f4f8" stroke-width="1.1"/><path d="M357.3 36.2 V37.2" stroke="#f2f4f8" stroke-width="0.9"/><circle cx="393.5" cy="41.6" r="8.1" fill="none" stroke="#f2f4f8" stroke-width="1.1"/><path d="M393.5 37.2 V41 M390.8 38.8 Q393 39.6 393.5 41 Q394 39.6 396.2 38.8" fill="none" stroke="#f2f4f8" stroke-width="1"/><path d="M11.2 80.6 L16.3 89 H6.1 Z" fill="none" stroke="#f26d4c" stroke-width="1.1" stroke-linejoin="round"/><path d="M11.2 83.6 V86.4" stroke="#f26d4c" stroke-width="0.9"/><circle cx="11.2" cy="87.6" r="0.5" fill="#f26d4c"/><path d="M47.8 80.2 L53.1 85.2 L47.8 90.2 L42.6 85.2 Z" fill="none" stroke="#f23a3a" stroke-width="1.1"/><path d="M47.8 82.6 V86.2" stroke="#f23a3a" stroke-width="0.9"/><circle cx="47.8" cy="87.7" r="0.5" fill="#f23a3a"/><path d="M77.8 80.3 H84.6 V85.6 H80.6 L78.6 87.6 V85.6 H77.8 Z" fill="none" stroke="#c98a4e" stroke-width="1"/><path d="M85.4 82.2 H86.6 V87.2 H85.2 V88.6 L83.6 87.2 H81.4" fill="none" stroke="#c98a4e" stroke-width="1"/><path d="M5.2 305.8 H14.8 V310.6 H11.6 L10 309 L8.4 310.6 H5.2 Z" fill="none" stroke="#2a2a2a" stroke-width="1.35"/><path d="M6.8 303.8 L8 302.6 M10 302.2 V303.4 M13.2 303.8 L12 302.6 M6.8 305.6 L7.6 304.2 H12.4 L13.2 305.6" fill="none" stroke="#2a2a2a" stroke-width="1.15"/><path d="M4.6 318.9 H11.2" stroke="#2a2a2a" stroke-width="1.45" stroke-dasharray="1.8 0.5"/><path d="M12.4 318.9 H15" stroke="#111" stroke-width="1.65"/><path d="M4.6 321.0 H11.2" stroke="#2a2a2a" stroke-width="1.45" stroke-dasharray="1.8 0.5"/><path d="M12.4 321.0 H15" stroke="#111" stroke-width="1.65"/><path d="M4.6 323.1 H11.2" stroke="#2a2a2a" stroke-width="1.45" stroke-dasharray="1.8 0.5"/><path d="M12.4 323.1 H15" stroke="#111" stroke-width="1.65"/><path d="M4.6 325.2 H11.2" stroke="#2a2a2a" stroke-width="1.45" stroke-dasharray="1.8 0.5"/><path d="M12.4 325.2 H15" stroke="#111" stroke-width="1.65"/><circle cx="7" cy="336.6" r="2.4" fill="none" stroke="#2a2a2a" stroke-width="1.35"/><circle cx="12.6" cy="339.2" r="2.6" fill="none" stroke="#2a2a2a" stroke-width="1.35"/><path d="M9.4 336.2 H11 L11.6 336.8" fill="none" stroke="#2a2a2a" stroke-width="1.15"/><rect x="4.7" y="349.5" width="9.8" height="7.8" fill="none" stroke="#2a2a2a" stroke-width="1.35"/><path d="M4.7 351.3 H14.5" stroke="#2a2a2a" stroke-width="1.45"/><rect x="10" y="352.8" width="2.6" height="3" fill="none" stroke="#2a2a2a" stroke-width="1.05"/><circle cx="9.7" cy="368.8" r="4.5" fill="none" stroke="#2a2a2a" stroke-width="1.35"/><path d="M9.7 371.4 V366.4 M8.1 368 L9.7 366.2 L11.3 368" fill="none" stroke="#2a2a2a" stroke-width="1.35"/><rect x="6.3" y="379.6" width="6.9" height="8.6" rx="1" fill="none" stroke="#2a2a2a" stroke-width="1.35"/><path d="M8.2 381.6 H11.2 M8.2 383.2 H11.2 M8.4 388 V385.4 H11 V388" fill="none" stroke="#2a2a2a" stroke-width="1.05"/><rect x="4.5" y="395.3" width="10.4" height="6.4" rx="1.2" fill="none" stroke="#2a2a2a" stroke-width="1.35"/><path d="M5.4 403.6 H15.6 V396.8" fill="none" stroke="#2a2a2a" stroke-width="1.25"/><rect x="7.6" y="410.6" width="4.8" height="2.4" fill="none" stroke="#2a2a2a" stroke-width="1.15"/><path d="M7 417.4 H5.5 V413.2 H14.5 V417.4 H13" fill="none" stroke="#2a2a2a" stroke-width="1.35"/><rect x="7.4" y="415.8" width="5.2" height="3.6" fill="none" stroke="#2a2a2a" stroke-width="1.25"/><path d="M120.9 92.6 V80.6 H130.4 V92.6" fill="none" stroke="#262626" stroke-width="1.3"/><path d="M121.8 92.2 L123.6 89.2 L125.6 89.6 L126.4 92.4 M123.6 89.2 L124.4 86 L126.8 84.8 L128 86.8 L129.4 87.2 M124.4 86 L122.4 87.4" fill="none" stroke="#262626" stroke-width="1.3" stroke-linejoin="round"/><circle cx="127.6" cy="82.9" r="1.2" fill="#262626"/><path d="M158.6 91.2 H151.2 V81.6 H163 V86.2" fill="none" stroke="#262626" stroke-width="1.3"/><path d="M151.2 83.9 H163" stroke="#262626" stroke-width="1.4"/><path d="M153.2 86.4 H154.8 M155.8 86.4 H159.8 M153.2 88.6 H154.8 M155.8 88.6 H158.2" stroke="#262626" stroke-width="1"/><circle cx="162.2" cy="90.4" r="3.6" fill="#fff" stroke="#262626" stroke-width="1.3"/><path d="M162.2 88.4 V92.4 M160.2 90.4 H164.2" stroke="#262626" stroke-width="1.2"/><path d="M187.2 91.8 H181.6 V81.2 H193.4 V85.8" fill="none" stroke="#262626" stroke-width="1.3"/><path d="M181.6 83.5 H193.4" stroke="#262626" stroke-width="1.4"/><path d="M183.6 86 H185.2 M186.2 86 H190 M183.6 88.2 H185.2 M186.2 88.2 H188.4" stroke="#262626" stroke-width="1"/><path d="M187.4 93.4 L188 90.6 L192.8 86 L194.8 88 L190 92.8 Z" fill="#fff" stroke="#262626" stroke-width="1.2"/><rect x="110.4" y="122.6" width="7" height="6.4" fill="#dde6f2" stroke="#9aaccc" stroke-width="0.7"/><path d="M112 128 L113.8 123.6 L115.6 128" fill="none" stroke="#334" stroke-width="0.8"/><path d="M154.4 125.2 H158.6 M154.4 126.8 H158.6" stroke="#556" stroke-width="0.8"/><rect x="195.6" y="122.6" width="5" height="6.4" fill="#dde6f2" stroke="#9aaccc" stroke-width="0.7"/><path d="M196.8 66.8 L199 69 L196.8 71.2" fill="none" stroke="#333" stroke-width="1.1"/></svg>
<div style="position:absolute;left:196.4px;top:40.9px;width:471.6px;height:20.1px;background:linear-gradient(90deg,#00125e 0px,#00005e 3px);border-top-right-radius:5px;border-top-left-radius:5px;"></div>
<div style="position:absolute;left:195.00px;top:51.76px;font-size:7.84px;line-height:7.84px;white-space:nowrap;color:#d8dde6;transform:scaleX(0.708);transform-origin:0 0;-webkit-text-stroke:0.1px #d8dde6;-webkit-text-stroke:0;">H</div>
<div style="position:absolute;left:200px;top:43.7px;width:463.29999999999995px;height:384.5px;background:#fff;border-left:1px solid #a8a8a8;border-bottom:1px solid #9c9c9c;box-sizing:border-box;"></div>
<div style="position:absolute;left:663.3px;top:61px;width:4.7000000000000455px;height:45.5px;background:linear-gradient(90deg,#a8a8a8,#c8c8c8 40%,#c4c4c4);"></div>
<div style="position:absolute;left:663.3px;top:106.5px;width:1.7000000000000455px;height:322.0px;background:linear-gradient(90deg,#a0a0a0,#dadada);"></div>
<div style="position:absolute;left:200.5px;top:428.2px;width:463.5px;height:1.6000000000000227px;background:linear-gradient(#c4c4c4,#e8e8e8);"></div>
<div style="position:absolute;left:202.40px;top:46.16px;font-size:7.84px;line-height:7.84px;white-space:nowrap;color:#1c1c1c;transform:scaleX(0.788);transform-origin:0 0;-webkit-text-stroke:0.1px #1c1c1c;">Job Maintenance</div>
<div style="position:absolute;left:205.50px;top:63.39px;font-size:14.3px;line-height:14.3px;white-space:nowrap;color:#1a1a1a;transform:scaleX(0.960);transform-origin:0 0;-webkit-text-stroke:0.1px #1a1a1a;-webkit-text-stroke:0;">New Job</div>
<svg style="position:absolute;left:650px;top:45px" width="10" height="10" viewBox="0 0 10 10"><path d="M1.9 2.1 L7.7 7.9 M7.7 2.1 L1.9 7.9" stroke="#333" stroke-width="0.9"/></svg>
<div style="position:absolute;left:205.2px;top:86.5px;width:133.3px;height:12.700000000000003px;border:1.8px solid #f00;box-sizing:border-box;"></div>
<div style="position:absolute;left:209.00px;top:89.76px;font-size:7.84px;line-height:7.84px;white-space:nowrap;color:#141414;font-weight:bold;transform:scaleX(0.800);transform-origin:0 0;">Job Name:</div>
<div style="position:absolute;left:243.8px;top:88.5px;width:1.0px;height:8.700000000000003px;background:#e0e0e0;"></div>
<div style="position:absolute;left:247.00px;top:89.76px;font-size:7.84px;line-height:7.84px;white-space:nowrap;color:#0a0a0a;font-weight:bold;transform:scaleX(0.808);transform-origin:0 0;">MyPlace XMLAPI</div>
<div style="position:absolute;left:341px;top:89.4px;width:7.199999999999989px;height:7.199999999999989px;border:1px solid #707070;background:#fff;box-sizing:border-box;"></div>
<div style="position:absolute;left:350.90px;top:89.86px;font-size:7.84px;line-height:7.84px;white-space:nowrap;color:#141414;font-weight:bold;transform:scaleX(0.823);transform-origin:0 0;">Inactive</div>
<div style="position:absolute;left:390.90px;top:89.76px;font-size:7.84px;line-height:7.84px;white-space:nowrap;color:#1c1c1c;transform:scaleX(0.767);transform-origin:0 0;-webkit-text-stroke:0.1px #1c1c1c;">Venue(s):</div>
<div style="position:absolute;left:417.2px;top:86.8px;width:102.50000000000006px;height:12.600000000000009px;border:1px solid #dadada;background:#fff;box-sizing:border-box;"></div>
<div style="position:absolute;left:510.4px;top:87.8px;width:1.0px;height:10.600000000000009px;background:#e4e4e4;"></div>
<svg style="position:absolute;left:512.05px;top:91.1px" width="6" height="4" viewBox="0 0 6 4"><path d="M0.5 0.8 L3 3.2 L5.5 0.8" fill="none" stroke="#555" stroke-width="0.9"/></svg>
<div style="position:absolute;left:421.00px;top:89.86px;font-size:7.84px;line-height:7.84px;white-space:nowrap;color:#141414;transform:scaleX(0.792);transform-origin:0 0;-webkit-text-stroke:0.1px #141414;">All Venues</div>
<div style="position:absolute;left:530.50px;top:89.36px;font-size:7.84px;line-height:7.84px;white-space:nowrap;color:#1c1c1c;transform:scaleX(0.733);transform-origin:0 0;-webkit-text-stroke:0.1px #1c1c1c;">Created:</div>
<div style="position:absolute;left:554.6px;top:86.9px;width:102.79999999999995px;height:11.5px;border:1px solid #dadada;background:#fff;box-sizing:border-box;"></div>
<div style="position:absolute;left:557.90px;top:89.36px;font-size:7.84px;line-height:7.84px;white-space:nowrap;color:#141414;transform:scaleX(0.807);transform-origin:0 0;-webkit-text-stroke:0.1px #141414;">14 Feb 2019 12:08 PM</div>
<div style="position:absolute;left:216.80px;top:105.26px;font-size:7.84px;line-height:7.84px;white-space:nowrap;color:#1c1c1c;transform:scaleX(0.722);transform-origin:0 0;-webkit-text-stroke:0.1px #1c1c1c;">Job Type:</div>
<div style="position:absolute;left:244px;top:102px;width:114px;height:12.099999999999994px;border:1px solid #dadada;background:#fff;box-sizing:border-box;"></div>
<div style="position:absolute;left:348.2px;top:103px;width:1.0px;height:10.099999999999994px;background:#e4e4e4;"></div>
<svg style="position:absolute;left:350.1px;top:106.05px" width="6" height="4" viewBox="0 0 6 4"><path d="M0.5 0.8 L3 3.2 L5.5 0.8" fill="none" stroke="#555" stroke-width="0.9"/></svg>
<div style="position:absolute;left:246.50px;top:104.96px;font-size:7.84px;line-height:7.84px;white-space:nowrap;color:#0a0a0a;font-weight:bold;transform:scaleX(0.787);transform-origin:0 0;">External DLL</div>
<div style="position:absolute;left:368.00px;top:105.46px;font-size:7.84px;line-height:7.84px;white-space:nowrap;color:#1c1c1c;transform:scaleX(0.768);transform-origin:0 0;-webkit-text-stroke:0.1px #1c1c1c;">Run Missed Jobs:</div>
<div style="position:absolute;left:417.2px;top:101.9px;width:92.30000000000001px;height:12.5px;border:1px solid #dadada;background:#fff;box-sizing:border-box;"></div>
<div style="position:absolute;left:500.0px;top:102.9px;width:1.0px;height:10.5px;background:#e4e4e4;"></div>
<svg style="position:absolute;left:501.75px;top:106.15px" width="6" height="4" viewBox="0 0 6 4"><path d="M0.5 0.8 L3 3.2 L5.5 0.8" fill="none" stroke="#555" stroke-width="0.9"/></svg>
<div style="position:absolute;left:419.30px;top:104.96px;font-size:7.84px;line-height:7.84px;white-space:nowrap;color:#141414;transform:scaleX(0.800);transform-origin:0 0;-webkit-text-stroke:0.1px #141414;">Never</div>
<div style="position:absolute;left:520.10px;top:104.46px;font-size:7.84px;line-height:7.84px;white-space:nowrap;color:#1c1c1c;transform:scaleX(0.821);transform-origin:0 0;-webkit-text-stroke:0.1px #1c1c1c;">Logging Mode:</div>
<div style="position:absolute;left:564.4px;top:101.2px;width:93.0px;height:13.0px;border:1px solid #dadada;background:#fff;box-sizing:border-box;"></div>
<div style="position:absolute;left:647.7px;top:102.2px;width:1.0px;height:11.0px;background:#e4e4e4;"></div>
<svg style="position:absolute;left:649.55px;top:105.7px" width="6" height="4" viewBox="0 0 6 4"><path d="M0.5 0.8 L3 3.2 L5.5 0.8" fill="none" stroke="#555" stroke-width="0.9"/></svg>
<div style="position:absolute;left:565.80px;top:104.46px;font-size:7.84px;line-height:7.84px;white-space:nowrap;color:#141414;transform:scaleX(0.788);transform-origin:0 0;-webkit-text-stroke:0.1px #141414;">Start And End</div>
<div style="position:absolute;left:212.70px;top:117.46px;font-size:7.84px;line-height:7.84px;white-space:nowrap;color:#1c1c1c;transform:scaleX(0.722);transform-origin:0 0;-webkit-text-stroke:0.1px #1c1c1c;">DLL Name:</div>
<div style="position:absolute;left:244px;top:116px;width:92.5px;height:10px;border:1px solid #dadada;background:#fff;box-sizing:border-box;"></div>
<div style="position:absolute;left:327.2px;top:117px;width:1.0px;height:8px;background:#e4e4e4;"></div>
<svg style="position:absolute;left:328.85px;top:119.0px" width="6" height="4" viewBox="0 0 6 4"><path d="M0.5 0.8 L3 3.2 L5.5 0.8" fill="none" stroke="#555" stroke-width="0.9"/></svg>
<div style="position:absolute;left:246.50px;top:117.56px;font-size:7.84px;line-height:7.84px;white-space:nowrap;color:#3a3a4a;transform:scaleX(0.776);transform-origin:0 0;-webkit-text-stroke:0.1px #3a3a4a;">Jobxml_api.Dll</div>
<div style="position:absolute;left:206.5px;top:114.6px;width:131.8px;height:11.700000000000003px;border:1.8px solid #f00;box-sizing:border-box;"></div>
<div style="position:absolute;left:340.70px;top:117.36px;font-size:7.84px;line-height:7.84px;white-space:nowrap;color:#141414;font-weight:bold;transform:scaleX(0.832);transform-origin:0 0;">v 4.5.2.178</div>
<div style="position:absolute;left:395.80px;top:117.36px;font-size:7.84px;line-height:7.84px;white-space:nowrap;color:#1c1c1c;transform:scaleX(0.741);transform-origin:0 0;-webkit-text-stroke:0.1px #1c1c1c;">Run as:</div>
<div style="position:absolute;left:417.2px;top:114.4px;width:92.30000000000001px;height:12.599999999999994px;border:1px solid #dadada;background:#fff;box-sizing:border-box;"></div>
<div style="position:absolute;left:500.0px;top:115.4px;width:1.0px;height:10.599999999999994px;background:#e4e4e4;"></div>
<svg style="position:absolute;left:501.75px;top:118.7px" width="6" height="4" viewBox="0 0 6 4"><path d="M0.5 0.8 L3 3.2 L5.5 0.8" fill="none" stroke="#555" stroke-width="0.9"/></svg>
<div style="position:absolute;left:419.30px;top:117.36px;font-size:7.84px;line-height:7.84px;white-space:nowrap;color:#141414;transform:scaleX(0.782);transform-origin:0 0;-webkit-text-stroke:0.1px #141414;">Master Setup</div>
<div style="position:absolute;left:523.60px;top:116.76px;font-size:7.84px;line-height:7.84px;white-space:nowrap;color:#1c1c1c;transform:scaleX(0.766);transform-origin:0 0;-webkit-text-stroke:0.1px #1c1c1c;">Overrides Job:</div>
<div style="position:absolute;left:564.4px;top:114.2px;width:93.0px;height:12.299999999999997px;border:1px solid #dadada;background:#fff;box-sizing:border-box;"></div>
<div style="position:absolute;left:647.7px;top:115.2px;width:1.0px;height:10.299999999999997px;background:#e4e4e4;"></div>
<svg style="position:absolute;left:649.55px;top:118.35px" width="6" height="4" viewBox="0 0 6 4"><path d="M0.5 0.8 L3 3.2 L5.5 0.8" fill="none" stroke="#555" stroke-width="0.9"/></svg>
<div style="position:absolute;left:565.80px;top:116.96px;font-size:7.84px;line-height:7.84px;white-space:nowrap;color:#141414;transform:scaleX(0.834);transform-origin:0 0;-webkit-text-stroke:0.1px #141414;">None</div>
<div style="position:absolute;left:209.30px;top:129.36px;font-size:7.84px;line-height:7.84px;white-space:nowrap;color:#1c1c1c;transform:scaleX(0.751);transform-origin:0 0;-webkit-text-stroke:0.1px #1c1c1c;">ClassName:</div>
<div style="position:absolute;left:244px;top:128.5px;width:92.5px;height:9.0px;border:1px solid #dadada;background:#fff;box-sizing:border-box;"></div>
<div style="position:absolute;left:327.2px;top:129.5px;width:1.0px;height:7.0px;background:#e4e4e4;"></div>
<svg style="position:absolute;left:328.85px;top:131.0px" width="6" height="4" viewBox="0 0 6 4"><path d="M0.5 0.8 L3 3.2 L5.5 0.8" fill="none" stroke="#555" stroke-width="0.9"/></svg>
<div style="position:absolute;left:246.50px;top:129.56px;font-size:7.84px;line-height:7.84px;white-space:nowrap;color:#0a0a0a;font-weight:bold;transform:scaleX(0.766);transform-origin:0 0;">XML_API</div>
<div style="position:absolute;left:207px;top:127.3px;width:131.3px;height:11.000000000000014px;border:1.8px solid #f00;box-sizing:border-box;"></div>
<div style="position:absolute;left:339.30px;top:129.76px;font-size:7.84px;line-height:7.84px;white-space:nowrap;color:#141414;font-weight:bold;transform:scaleX(0.784);transform-origin:0 0;">Bepoz XML API</div>
<div style="position:absolute;left:527.00px;top:129.16px;font-size:7.84px;line-height:7.84px;white-space:nowrap;color:#1c1c1c;transform:scaleX(0.772);transform-origin:0 0;-webkit-text-stroke:0.1px #1c1c1c;">Chained Job:</div>
<div style="position:absolute;left:564.4px;top:126.5px;width:93.0px;height:11.900000000000006px;border:1px solid #dadada;background:#fff;box-sizing:border-box;"></div>
<div style="position:absolute;left:647.7px;top:127.5px;width:1.0px;height:9.900000000000006px;background:#e4e4e4;"></div>
<svg style="position:absolute;left:649.55px;top:130.45px" width="6" height="4" viewBox="0 0 6 4"><path d="M0.5 0.8 L3 3.2 L5.5 0.8" fill="none" stroke="#555" stroke-width="0.9"/></svg>
<div style="position:absolute;left:565.80px;top:129.16px;font-size:7.84px;line-height:7.84px;white-space:nowrap;color:#141414;transform:scaleX(0.834);transform-origin:0 0;-webkit-text-stroke:0.1px #141414;">None</div>
<div style="position:absolute;left:244.6px;top:148.2px;width:348.4px;height:58.80000000000001px;border:1px solid #d4d4d4;box-sizing:border-box;"></div>
<div style="position:absolute;left:246px;top:145px;width:33px;height:5px;background:#fff;"></div>
<div style="position:absolute;left:248.00px;top:144.26px;font-size:7.84px;line-height:7.84px;white-space:nowrap;color:#141414;font-weight:bold;transform:scaleX(0.756);transform-origin:0 0;">Schedules</div>
<div style="position:absolute;left:248.4px;top:151.7px;width:314.0px;height:24.900000000000006px;border:1px solid #a8a8a8;border-left:1.5px solid #888;box-sizing:border-box;background:#fff;"></div>
<div style="position:absolute;left:249.5px;top:175px;width:312.5px;height:1px;background:#d8d8d8;"></div>
<div style="position:absolute;left:255.40px;top:155.16px;font-size:7.84px;line-height:7.84px;white-space:nowrap;color:#1c1c1c;transform:scaleX(0.760);transform-origin:0 0;-webkit-text-stroke:0.1px #1c1c1c;">Start Date</div>
<div style="position:absolute;left:297.00px;top:155.16px;font-size:7.84px;line-height:7.84px;white-space:nowrap;color:#1c1c1c;transform:scaleX(0.772);transform-origin:0 0;-webkit-text-stroke:0.1px #1c1c1c;">End Date</div>
<div style="position:absolute;left:333.90px;top:155.36px;font-size:7.84px;line-height:7.84px;white-space:nowrap;color:#1c1c1c;transform:scaleX(0.768);transform-origin:0 0;-webkit-text-stroke:0.1px #1c1c1c;">Time Start</div>
<div style="position:absolute;left:447.60px;top:155.06px;font-size:7.84px;line-height:7.84px;white-space:nowrap;color:#1c1c1c;transform:scaleX(0.799);transform-origin:0 0;-webkit-text-stroke:0.1px #1c1c1c;">Description</div>
<div style="position:absolute;left:252.30px;top:166.76px;font-size:7.84px;line-height:7.84px;white-space:nowrap;color:#1c1c1c;transform:scaleX(0.868);transform-origin:0 0;-webkit-text-stroke:0.1px #1c1c1c;">14/02/2019</div>
<div style="position:absolute;left:290.70px;top:166.76px;font-size:7.84px;line-height:7.84px;white-space:nowrap;color:#1c1c1c;transform:scaleX(0.781);transform-origin:0 0;-webkit-text-stroke:0.1px #1c1c1c;">No End Date</div>
<div style="position:absolute;left:333.40px;top:166.76px;font-size:7.84px;line-height:7.84px;white-space:nowrap;color:#1c1c1c;transform:scaleX(0.792);transform-origin:0 0;-webkit-text-stroke:0.1px #1c1c1c;">Startup</div>
<div style="position:absolute;left:366.60px;top:166.76px;font-size:7.84px;line-height:7.84px;white-space:nowrap;color:#1c1c1c;transform:scaleX(0.766);transform-origin:0 0;-webkit-text-stroke:0.1px #1c1c1c;">Everyday</div>
<div style="position:absolute;left:248.4px;top:176px;width:1.1999999999999886px;height:27.5px;background:#c8c8c8;"></div>
<div style="position:absolute;left:288px;top:165px;width:0.8000000000000114px;height:10.5px;background:#999;"></div>
<div style="position:absolute;left:330.5px;top:165px;width:0.8000000000000114px;height:10.5px;background:#999;"></div>
<div style="position:absolute;left:363.7px;top:165px;width:0.8000000000000114px;height:10.5px;background:#999;"></div>
<div style="position:absolute;left:566.5px;top:153.5px;width:24.5px;height:8.900000000000006px;background:#5ec8c8;"></div>
<div style="position:absolute;left:573.20px;top:154.76px;font-size:7.84px;line-height:7.84px;white-space:nowrap;color:#fff;transform:scaleX(0.790);transform-origin:0 0;-webkit-text-stroke:0.1px #fff;">Add</div>
<div style="position:absolute;left:566.5px;top:170.2px;width:24.5px;height:8.800000000000011px;background:#5ec8c8;"></div>
<div style="position:absolute;left:573.20px;top:171.36px;font-size:7.84px;line-height:7.84px;white-space:nowrap;color:#fff;transform:scaleX(0.815);transform-origin:0 0;-webkit-text-stroke:0.1px #fff;">Edit</div>
<div style="position:absolute;left:566.5px;top:187px;width:24.5px;height:9.5px;background:#5ec8c8;"></div>
<div style="position:absolute;left:569.70px;top:188.56px;font-size:7.84px;line-height:7.84px;white-space:nowrap;color:#fff;transform:scaleX(0.795);transform-origin:0 0;-webkit-text-stroke:0.1px #fff;">Delete</div>
<div style="position:absolute;left:561.3px;top:148px;width:33.90000000000009px;height:19.099999999999994px;border:1.8px solid #f00;box-sizing:border-box;"></div>
<div style="position:absolute;left:249.70px;top:215.46px;font-size:7.84px;line-height:7.84px;white-space:nowrap;color:#1c1c1c;transform:scaleX(0.793);transform-origin:0 0;-webkit-text-stroke:0.1px #1c1c1c;">Next Run:</div>
<div style="position:absolute;left:278.5px;top:213.1px;width:94.19999999999999px;height:10.5px;border:1px solid #dadada;background:#fff;box-sizing:border-box;"></div>
<div style="position:absolute;left:364px;top:214.5px;width:8.199999999999989px;height:7.699999999999989px;background:#ececec;border:1px solid #d4d4d4;box-sizing:border-box;"></div>
<svg style="position:absolute;left:366.1px;top:216.75px" width="4" height="3.2" viewBox="0 0 4 3.2"><path d="M0 0 L1.8 1.6 L0 3.2Z M2 0 L3.8 1.6 L2 3.2Z" fill="#3a2a5a"/></svg>
<div style="position:absolute;left:281.80px;top:215.26px;font-size:7.84px;line-height:7.84px;white-space:nowrap;color:#141414;transform:scaleX(0.794);transform-origin:0 0;-webkit-text-stroke:0.1px #141414;">Never (Startup)</div>
<div style="position:absolute;left:374.80px;top:215.26px;font-size:7.84px;line-height:7.84px;white-space:nowrap;color:#1c1c1c;transform:scaleX(0.793);transform-origin:0 0;-webkit-text-stroke:0.1px #1c1c1c;">Run Count:</div>
<div style="position:absolute;left:407px;top:212.5px;width:35px;height:10.800000000000011px;border:1px solid #dadada;background:#fff;box-sizing:border-box;"></div>
<div style="position:absolute;left:433.6px;top:214px;width:7.899999999999977px;height:8px;background:#ececec;border:1px solid #d4d4d4;box-sizing:border-box;"></div>
<svg style="position:absolute;left:435.55px;top:216.4px" width="4" height="3.2" viewBox="0 0 4 3.2"><path d="M0 0 L1.8 1.6 L0 3.2Z M2 0 L3.8 1.6 L2 3.2Z" fill="#3a2a5a"/></svg>
<div style="position:absolute;left:410.60px;top:215.06px;font-size:7.84px;line-height:7.84px;white-space:nowrap;color:#141414;-webkit-text-stroke:0.1px #141414;">0</div>
<div style="position:absolute;left:445.30px;top:214.76px;font-size:7.84px;line-height:7.84px;white-space:nowrap;color:#1c1c1c;transform:scaleX(0.752);transform-origin:0 0;-webkit-text-stroke:0.1px #1c1c1c;">Last Run:</div>
<div style="position:absolute;left:472.2px;top:213.2px;width:96.69999999999999px;height:9.5px;border:1px solid #dadada;background:#fff;box-sizing:border-box;"></div>
<div style="position:absolute;left:560.5px;top:214.2px;width:8.0px;height:7.800000000000011px;background:#ececec;border:1px solid #d4d4d4;box-sizing:border-box;"></div>
<svg style="position:absolute;left:562.5px;top:216.5px" width="4" height="3.2" viewBox="0 0 4 3.2"><path d="M0 0 L1.8 1.6 L0 3.2Z M2 0 L3.8 1.6 L2 3.2Z" fill="#3a2a5a"/></svg>
<div style="position:absolute;left:475.30px;top:214.76px;font-size:7.84px;line-height:7.84px;white-space:nowrap;color:#141414;transform:scaleX(0.800);transform-origin:0 0;-webkit-text-stroke:0.1px #141414;">Never</div>
<div style="position:absolute;left:212.6px;top:232.4px;width:442.4px;height:167.6px;border:1px solid #c8c8c8;box-sizing:border-box;"></div>
<div style="position:absolute;left:214px;top:229px;width:39px;height:6px;background:#fff;"></div>
<div style="position:absolute;left:216.50px;top:228.06px;font-size:7.84px;line-height:7.84px;white-space:nowrap;color:#141414;font-weight:bold;transform:scaleX(0.756);transform-origin:0 0;">Job Options</div>
<div style="position:absolute;left:223.9px;top:237.5px;width:7.199999999999989px;height:7.199999999999989px;border:1px solid #707070;background:#fff;box-sizing:border-box;"></div>
<svg style="position:absolute;left:223.9px;top:237.5px" width="7.199999999999989" height="7.199999999999989" viewBox="0 0 7 7"><path d="M1.4 3.6 L2.9 5.2 L5.8 1.7" fill="none" stroke="#222" stroke-width="1.1"/></svg>
<div style="position:absolute;left:234.00px;top:238.16px;font-size:7.84px;line-height:7.84px;white-space:nowrap;color:#1c1c1c;transform:scaleX(0.771);transform-origin:0 0;-webkit-text-stroke:0.1px #1c1c1c;">Bypass MAC Security:</div>
<div style="position:absolute;left:223.9px;top:246.6px;width:7.199999999999989px;height:7.200000000000017px;border:1px solid #707070;background:#fff;box-sizing:border-box;"></div>
<div style="position:absolute;left:234.00px;top:246.56px;font-size:7.84px;line-height:7.84px;white-space:nowrap;color:#1c1c1c;transform:scaleX(0.766);transform-origin:0 0;-webkit-text-stroke:0.1px #1c1c1c;">Use External Comms:</div>
<div style="position:absolute;left:214.3px;top:235.4px;width:86.09999999999997px;height:11.0px;border:1.8px solid #f00;box-sizing:border-box;"></div>
<div style="position:absolute;left:274.70px;top:288.26px;font-size:7.84px;line-height:7.84px;white-space:nowrap;color:#1c1c1c;transform:scaleX(0.767);transform-origin:0 0;-webkit-text-stroke:0.1px #1c1c1c;">MAC Secret Key</div>
<div style="position:absolute;left:320.6px;top:285.4px;width:309.79999999999995px;height:10.0px;border:1px solid #dadada;background:#fff;box-sizing:border-box;"></div>
<div style="position:absolute;left:623.4px;top:287.7px;width:6.600000000000023px;height:6.0px;background:#ececec;border:1px solid #d4d4d4;box-sizing:border-box;"></div>
<svg style="position:absolute;left:624.7px;top:289.09999999999997px" width="4" height="3.2" viewBox="0 0 4 3.2"><path d="M0 0 L1.8 1.6 L0 3.2Z M2 0 L3.8 1.6 L2 3.2Z" fill="#3a2a5a"/></svg>
<div style="position:absolute;left:323.60px;top:287.56px;font-size:7.84px;line-height:7.84px;white-space:nowrap;color:#141414;transform:scaleX(0.806);transform-origin:0 0;-webkit-text-stroke:0.1px #141414;">B3p0$_123</div>
<div style="position:absolute;left:269.3px;top:281.8px;width:95.5px;height:15.599999999999966px;border:1.8px solid #f00;box-sizing:border-box;"></div>
<div style="position:absolute;left:295.80px;top:298.66px;font-size:7.84px;line-height:7.84px;white-space:nowrap;color:#1c1c1c;transform:scaleX(0.776);transform-origin:0 0;-webkit-text-stroke:0.1px #1c1c1c;">ClientID:</div>
<div style="position:absolute;left:320.6px;top:296.6px;width:309.79999999999995px;height:9.799999999999955px;border:1px solid #dadada;background:#fff;box-sizing:border-box;"></div>
<div style="position:absolute;left:280.40px;top:344.16px;font-size:7.84px;line-height:7.84px;white-space:nowrap;color:#1c1c1c;transform:scaleX(0.799);transform-origin:0 0;-webkit-text-stroke:0.1px #1c1c1c;">Connection Port:</div>
<div style="position:absolute;left:331px;top:341.4px;width:45px;height:9.400000000000034px;border:1px solid #e2e2e2;box-sizing:border-box;"></div>
<div style="position:absolute;left:361.00px;top:344.16px;font-size:7.84px;line-height:7.84px;white-space:nowrap;color:#141414;transform:scaleX(0.735);transform-origin:0 0;-webkit-text-stroke:0.1px #141414;">9,193</div>
<div style="position:absolute;left:268.00px;top:356.16px;font-size:7.84px;line-height:7.84px;white-space:nowrap;color:#1c1c1c;transform:scaleX(0.775);transform-origin:0 0;-webkit-text-stroke:0.1px #1c1c1c;">Failure Retries Count:</div>
<div style="position:absolute;left:331px;top:355.2px;width:45px;height:7.699999999999989px;border:1px solid #e2e2e2;box-sizing:border-box;"></div>
<div style="position:absolute;left:368.80px;top:356.16px;font-size:7.84px;line-height:7.84px;white-space:nowrap;color:#141414;transform:scaleX(0.758);transform-origin:0 0;-webkit-text-stroke:0.1px #141414;">30</div>
<div style="position:absolute;left:249.00px;top:368.16px;font-size:7.84px;line-height:7.84px;white-space:nowrap;color:#1c1c1c;transform:scaleX(0.776);transform-origin:0 0;-webkit-text-stroke:0.1px #1c1c1c;">Failure Retries Interval (sec):</div>
<div style="position:absolute;left:331px;top:367.2px;width:45px;height:8.400000000000034px;border:1px solid #e2e2e2;box-sizing:border-box;"></div>
<div style="position:absolute;left:368.80px;top:368.16px;font-size:7.84px;line-height:7.84px;white-space:nowrap;color:#141414;transform:scaleX(0.758);transform-origin:0 0;-webkit-text-stroke:0.1px #141414;">30</div>
<div style="position:absolute;left:278.5px;top:339.2px;width:99.69999999999999px;height:13.600000000000023px;border:1.8px solid #f00;box-sizing:border-box;"></div>
<div style="position:absolute;left:264.2px;top:353.8px;width:114.0px;height:11.199999999999989px;border:1.8px solid #f00;box-sizing:border-box;"></div>
<div style="position:absolute;left:244px;top:365.8px;width:134.2px;height:11.599999999999966px;border:1.8px solid #f00;box-sizing:border-box;"></div>
<div style="position:absolute;left:317.60px;top:390.76px;font-size:7.84px;line-height:7.84px;white-space:nowrap;color:#1c1c1c;transform:scaleX(0.808);transform-origin:0 0;-webkit-text-stroke:0.1px #1c1c1c;">Till:</div>
<div style="position:absolute;left:328.6px;top:387.5px;width:86.69999999999999px;height:11.699999999999989px;border:1px solid #dadada;background:#fff;box-sizing:border-box;"></div>
<div style="position:absolute;left:406.7px;top:388.5px;width:1.0px;height:9.699999999999989px;background:#e4e4e4;"></div>
<svg style="position:absolute;left:408.0px;top:391.35px" width="6" height="4" viewBox="0 0 6 4"><path d="M0.5 0.8 L3 3.2 L5.5 0.8" fill="none" stroke="#555" stroke-width="0.9"/></svg>
<div style="position:absolute;left:331.00px;top:390.36px;font-size:7.84px;line-height:7.84px;white-space:nowrap;color:#141414;transform:scaleX(0.800);transform-origin:0 0;-webkit-text-stroke:0.1px #141414;">API Till</div>
<div style="position:absolute;left:314.8px;top:385.7px;width:102.19999999999999px;height:15.100000000000023px;border:1.8px solid #f00;box-sizing:border-box;"></div>
<div style="position:absolute;left:428.2px;top:404.1px;width:39.80000000000001px;height:18.19999999999999px;background:#5ec8c8;"></div>
<div style="position:absolute;left:434.60px;top:409.96px;font-size:7.84px;line-height:7.84px;white-space:nowrap;color:#e8fafa;transform:scaleX(0.786);transform-origin:0 0;-webkit-text-stroke:0.1px #e8fafa;">Run Now!</div>
<div style="position:absolute;left:561.8px;top:404.7px;width:40.30000000000007px;height:18.80000000000001px;background:#33cc33;border:1px solid #6f7f6f;box-sizing:border-box;"></div>
<div style="position:absolute;left:577.40px;top:410.86px;font-size:7.84px;line-height:7.84px;white-space:nowrap;color:#fff;transform:scaleX(0.796);transform-origin:0 0;-webkit-text-stroke:0.1px #fff;">OK</div>
<div style="position:absolute;left:611px;top:404.7px;width:39.799999999999955px;height:18.80000000000001px;background:#ff0000;"></div>
<div style="position:absolute;left:621.65px;top:410.86px;font-size:7.84px;line-height:7.84px;white-space:nowrap;color:#fff;transform:scaleX(0.759);transform-origin:0 0;-webkit-text-stroke:0.1px #fff;">Cancel</div>
</body></html>
